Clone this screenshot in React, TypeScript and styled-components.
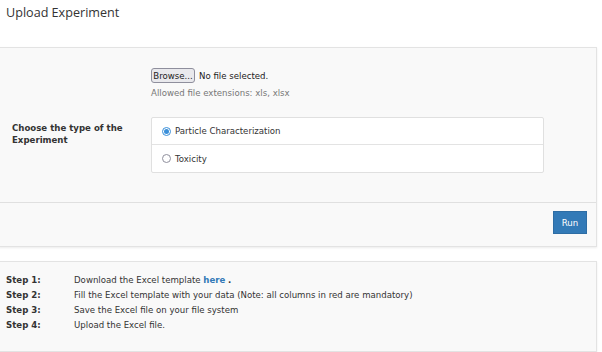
import React from "react";
import styled, { createGlobalStyle } from "styled-components";

const Global = createGlobalStyle`
  html, body { margin: 0; padding: 0; background: #fff; }
  body { font-family: "DejaVu Sans", sans-serif; font-size: 8.6px; color: #333; }
  * { box-sizing: border-box; }
`;

const Page = styled.div`
  width: 602px;
  height: 352px;
  overflow: hidden;
  display: flex;
  flex-direction: column;
  & > * { flex-shrink: 0; }
`;

const Title = styled.h1`
  margin: 0;
  padding: 4px 6px 0;
  height: 47px;
  font-family: "Open Sans", sans-serif;
  font-weight: 400;
  font-size: 12.6px;
  line-height: 18px;
  color: #333;
`;

const Panel = styled.div`
  margin: 0 5px 0 -1px;
  background: #f9f9f9;
  border: 1px solid #e3e3e3;
  box-shadow: 0 1px 2px rgba(0, 0, 0, 0.08);
`;

const FormBody = styled.div`
  padding: 20px 0 29px;
  display: flex;
  flex-direction: column;
`;

const FieldRow = styled.div<{ $gap?: number }>`
  display: grid;
  grid-template-columns: 151px 393px;
  align-items: start;
  margin-top: ${(p) => p.$gap ?? 0}px;
`;

const FileCell = styled.div`
  grid-column: 2;
  display: flex;
  flex-direction: column;
`;

const FileRow = styled.div`
  display: flex;
  align-items: center;
  gap: 4px;
  color: #222;
`;

const BrowseButton = styled.button`
  font-family: "DejaVu Sans", sans-serif;
  font-size: 8.6px;
  color: #222;
  height: 15px;
  width: 44px;
  padding: 0;
  background: #e9e9ed;
  border: 1px solid #8f8f9d;
  border-radius: 3px;
`;

const Hint = styled.div`
  margin-top: 4px;
  color: #777;
  line-height: 12px;
`;

const FieldLabel = styled.div`
  padding: 5px 0 0 12px;
  font-weight: bold;
  line-height: 12px;
  width: 130px;
`;

const RadioList = styled.div`
  display: flex;
  flex-direction: column;
  background: #fff;
  border: 1px solid #e0e0e0;
  border-radius: 2px;
`;

const RadioItem = styled.label<{ $last?: boolean }>`
  display: flex;
  align-items: center;
  gap: 4px;
  height: 27px;
  padding-left: 10px;
  color: #333;
  border-bottom: ${(p) => (p.$last ? "none" : "1px solid #e3e3e3")};
`;

const RadioDot = styled.span<{ $checked?: boolean }>`
  width: 9px;
  height: 9px;
  border-radius: 50%;
  border: 1px solid ${(p) => (p.$checked ? "#3a8fd9" : "#8f8f9d")};
  background: #fff;
  display: flex;
  align-items: center;
  justify-content: center;
  &::after {
    content: "";
    width: 5px;
    height: 5px;
    border-radius: 50%;
    background: ${(p) => (p.$checked ? "#3a8fd9" : "transparent")};
  }
`;

const Footer = styled.div`
  border-top: 1px solid #e0e0e0;
  display: flex;
  justify-content: flex-end;
  padding: 8px 9px 12px;
`;

const RunButton = styled.button`
  font-family: "DejaVu Sans", sans-serif;
  font-size: 8.6px;
  color: #fff;
  background: #337ab7;
  border: 1px solid #2e6da4;
  width: 34px;
  height: 23px;
  padding: 0;
`;

const StepsPanel = styled(Panel)`
  margin-top: 14px;
  padding: 11px 0 18px 6px;
`;

const StepRow = styled.div`
  display: grid;
  grid-template-columns: 68px 1fr;
  line-height: 15px;
`;

const StepLabel = styled.span`
  font-weight: bold;
`;

const Link = styled.a`
  color: #337ab7;
  font-weight: bold;
  text-decoration: none;
`;

export default function App() {
  return (
    <Page>
      <Global />
      <Title>Upload Experiment</Title>
      <Panel>
        <FormBody>
          <FieldRow>
            <FileCell>
              <FileRow>
                <BrowseButton>Browse...</BrowseButton>
                <span>No file selected.</span>
              </FileRow>
              <Hint>Allowed file extensions: xls, xlsx</Hint>
            </FileCell>
          </FieldRow>
          <FieldRow $gap={18}>
            <FieldLabel>Choose the type of the Experiment</FieldLabel>
            <RadioList>
              <RadioItem>
                <RadioDot $checked />
                Particle Characterization
              </RadioItem>
              <RadioItem $last>
                <RadioDot />
                Toxicity
              </RadioItem>
            </RadioList>
          </FieldRow>
        </FormBody>
        <Footer>
          <RunButton>Run</RunButton>
        </Footer>
      </Panel>
      <StepsPanel>
        <StepRow>
          <StepLabel>Step 1:</StepLabel>
          <span>
            Download the Excel template <Link href="#">here</Link> <b>.</b>
          </span>
        </StepRow>
        <StepRow>
          <StepLabel>Step 2:</StepLabel>
          <span>Fill the Excel template with your data (Note: all columns in red are mandatory)</span>
        </StepRow>
        <StepRow>
          <StepLabel>Step 3:</StepLabel>
          <span>Save the Excel file on your file system</span>
        </StepRow>
        <StepRow>
          <StepLabel>Step 4:</StepLabel>
          <span>Upload the Excel file.</span>
        </StepRow>
      </StepsPanel>
    </Page>
  );
}
